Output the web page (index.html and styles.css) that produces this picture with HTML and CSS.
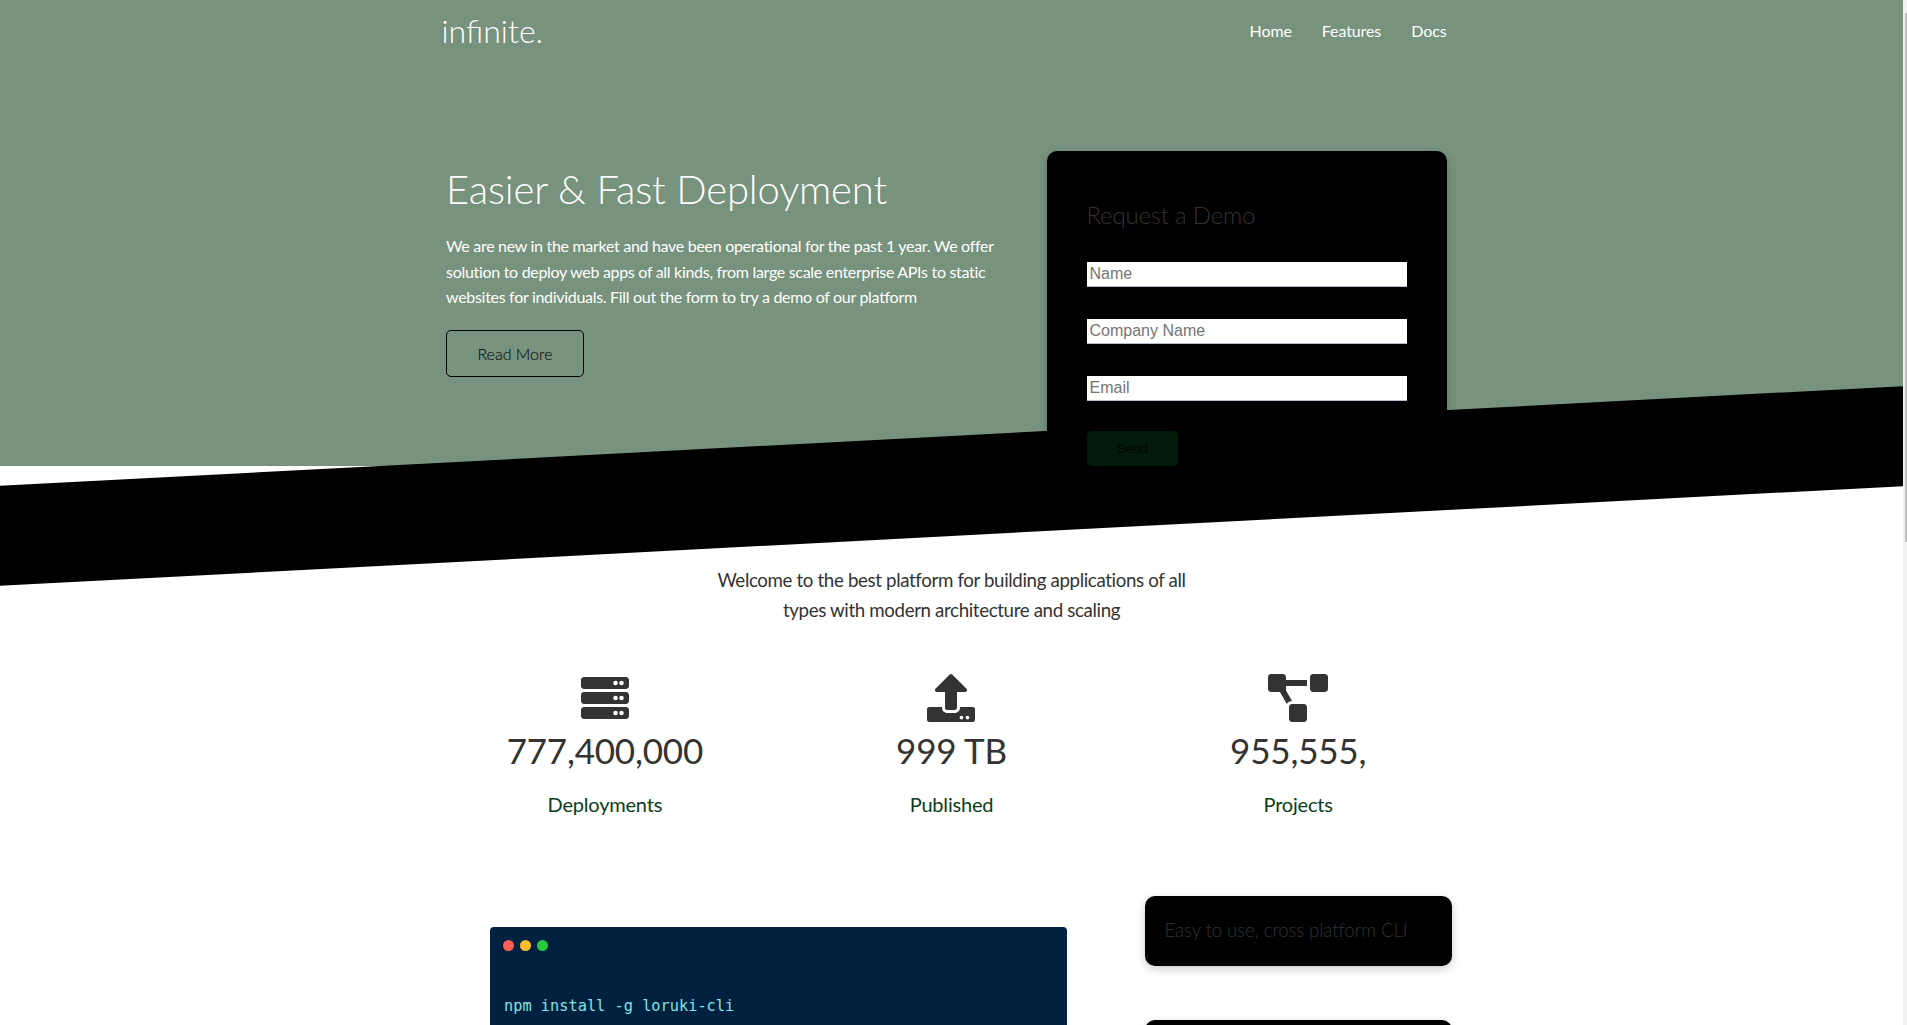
FILE: index.html
```html
<!DOCTYPE html>
<html lang="en">
<head>
<meta charset="utf-8">
<title>infinite.</title>
<link rel="stylesheet" href="styles.css">
</head>
<body>
<div class="page">
  <header class="navbar">
    <div class="container navbar-inner">
      <h1 class="logo">infinite.</h1>
      <nav class="menu"><a>Home</a><a>Features</a><a>Docs</a></nav>
    </div>
  </header>

  <section class="showcase">
    <div class="container showcase-grid">
      <div class="showcase-text">
        <h1>Easier &amp; Fast Deployment</h1>
        <p>We are new in the market and have been operational for the past 1 year. We offer solution to deploy web apps of all kinds, from large scale enterprise APIs to static websites for individuals. Fill out the form to try a demo of our platform</p>
        <a class="btn-outline">Read More</a>
      </div>
      <form class="card showcase-form">
        <h2>Request a Demo</h2>
        <input type="text" placeholder="Name">
        <input type="text" placeholder="Company Name">
        <input type="text" placeholder="Email">
        <button type="button">Send</button>
      </form>
    </div>
  </section>

  <section class="stats container">
    <h3 class="stats-heading">Welcome to the best platform for building applications of all types with modern architecture and scaling</h3>
    <div class="stats-grid">
      <div class="stat">
        <svg width="48" height="48" viewBox="0 0 512 512"><path d="M480 160H32c-17.7 0-32-14.3-32-32V64c0-17.7 14.3-32 32-32h448c17.7 0 32 14.3 32 32v64c0 17.7-14.3 32-32 32zm-48-88a24 24 0 1 0 0 48 24 24 0 0 0 0-48zm-64 0a24 24 0 1 0 0 48 24 24 0 0 0 0-48zM480 320H32c-17.7 0-32-14.3-32-32v-64c0-17.7 14.3-32 32-32h448c17.7 0 32 14.3 32 32v64c0 17.7-14.3 32-32 32zm-48-88a24 24 0 1 0 0 48 24 24 0 0 0 0-48zm-64 0a24 24 0 1 0 0 48 24 24 0 0 0 0-48zM480 480H32c-17.7 0-32-14.3-32-32v-64c0-17.7 14.3-32 32-32h448c17.7 0 32 14.3 32 32v64c0 17.7-14.3 32-32 32zm-48-88a24 24 0 1 0 0 48 24 24 0 0 0 0-48zm-64 0a24 24 0 1 0 0 48 24 24 0 0 0 0-48z"/></svg>
        <h3>777,400,000</h3>
        <p>Deployments</p>
      </div>
      <div class="stat">
        <svg width="48" height="48" viewBox="0 0 512 512"><path d="M296 384h-80c-13.3 0-24-10.7-24-24V192h-87.7c-17.8 0-26.7-21.5-14.1-34.1L242.3 5.7c7.5-7.5 19.8-7.5 27.3 0l152.2 152.2c12.6 12.6 3.7 34.1-14.1 34.1H320v168c0 13.3-10.7 24-24 24zm216-8v112c0 13.3-10.7 24-24 24H24c-13.3 0-24-10.7-24-24V376c0-13.3 10.7-24 24-24h136v8c0 30.9 25.1 56 56 56h80c30.9 0 56-25.1 56-56v-8h136c13.3 0 24 10.7 24 24zm-124 88c0-11-9-20-20-20s-20 9-20 20 9 20 20 20 20-9 20-20zm64 0c0-11-9-20-20-20s-20 9-20 20 9 20 20 20 20-9 20-20z"/></svg>
        <h3>999 TB</h3>
        <p>Published</p>
      </div>
      <div class="stat">
        <svg width="60" height="48" viewBox="0 0 640 512"><path d="M384 320H256c-17.67 0-32 14.33-32 32v128c0 17.67 14.33 32 32 32h128c17.67 0 32-14.33 32-32V352c0-17.67-14.33-32-32-32zM192 32c0-17.67-14.33-32-32-32H32C14.33 0 0 14.33 0 32v128c0 17.67 14.33 32 32 32h95.72l73.16 128.04C211.98 300.98 232.4 288 256 288h.28L192 175.51V128h224V64H192V32zM608 0H480c-17.67 0-32 14.33-32 32v128c0 17.67 14.33 32 32 32h128c17.67 0 32-14.33 32-32V32c0-17.67-14.33-32-32-32z"/></svg>
        <h3>955,555,</h3>
        <p>Projects</p>
      </div>
    </div>
  </section>

  <section class="cli container">
    <div class="terminal">
      <div class="dots"><i class="red"></i><i class="yellow"></i><i class="green"></i></div>
      <code>npm install -g loruki-cli</code>
    </div>
    <div class="cli-cards">
      <div class="card cli-card"><h3>Easy to use, cross platform CLI</h3></div>
      <div class="card cli-card"></div>
    </div>
  </section>
</div>
<div class="scrollbar"><div class="thumb"></div></div>
</body>
</html>
```
FILE: styles.css
```css
* { box-sizing: border-box; margin: 0; padding: 0; }

body {
  display: flex;
  height: 1025px;
  overflow: hidden;
  font-family: Lato, sans-serif;
  font-size: 16px;
  font-weight: 400;
  line-height: 1.6;
  font-variant-ligatures: none;
  color: #333;
  background: #fff;
}

h1, h2 { font-weight: 300; line-height: 1.2; }

.page { width: 1903px; height: 1025px; overflow: hidden; }

.container { width: 1100px; margin: 0 auto; padding: 0 40px; }

.navbar { height: 66px; background: #77927d; color: #fff; }
.navbar-inner { display: flex; justify-content: space-between; }
.logo { padding-top: 12px; font-size: 32px; font-variant-ligatures: normal; }
.menu { display: flex; gap: 30px; padding: 18px 15px 0 0; letter-spacing: -0.1px; }

.showcase { position: relative; height: 400px; background: #77927d; color: #fff; }
.showcase::before {
  content: "";
  position: absolute;
  left: 0;
  right: 0;
  bottom: -70px;
  height: 100px;
  background: #000;
  transform: skewY(-3deg);
}
.showcase-grid { position: relative; display: flex; justify-content: space-between; padding: 0 55px 0 44.5px; }
.showcase-text { width: 561px; padding-top: 99px; }
.showcase-text h1 { font-size: 40px; letter-spacing: -0.15px; }
.showcase-text p { margin: 20px 0; letter-spacing: -0.3px; }
.btn-outline {
  display: inline-block;
  width: 138px;
  padding: 10px 0;
  border: 1px solid #000;
  border-radius: 5px;
  color: #000;
  font-weight: 300;
  text-align: center;
}

.card { background: #000; border-radius: 10px; box-shadow: 0 3px 10px rgba(0, 0, 0, 0.2); }

.showcase-form { width: 400px; height: 350px; margin-top: 85px; padding: 49px 40px 40px; color: #333; }
.showcase-form h2 { margin-bottom: 33px; font-size: 24px; line-height: 29px; letter-spacing: -0.2px; }
.showcase-form input {
  display: block;
  width: 100%;
  height: 25px;
  margin-bottom: 32px;
  padding: 0 3px 1px;
  border: 0;
  border-bottom: 1px solid #b4becb;
  font: 16px "Liberation Sans", sans-serif;
}
.showcase-form input::placeholder { color: #757575; }
.showcase-form button {
  display: block;
  width: 91px;
  height: 35px;
  margin-top: -2px;
  border: 0;
  border-radius: 5px;
  background: #001b07;
  color: #000;
  font: 13.33px "Liberation Sans", sans-serif;
}

.stats { padding-top: 100px; text-align: center; }
.stats-heading { width: 500px; margin: 0 auto; font-size: 18.72px; font-weight: 400; letter-spacing: -0.36px; }
.stats-grid { display: grid; grid-template-columns: repeat(3, 1fr); gap: 20px; margin-top: 48px; }
.stat svg { display: block; margin: 0 auto; fill: #333; }
.stat h3 { font-size: 35px; font-weight: 400; line-height: 56px; letter-spacing: -0.2px; }
.stat p { margin-top: 10px; color: #0a3d1a; font-size: 20px; letter-spacing: -0.2px; }

.cli { display: grid; grid-template-columns: 2fr 1fr; gap: 20px; margin-top: 76px; }
.terminal {
  width: 577px;
  height: 300px;
  margin: 31px 0 0 48.5px;
  padding: 13px 12.5px;
  border-radius: 4px;
  background: #002240;
}
.dots { display: flex; gap: 6px; }
.dots i { width: 11px; height: 11px; border-radius: 50%; }
.red { background: #ff5f56; }
.yellow { background: #ffbd2e; }
.green { background: #27c93f; }
.terminal code {
  display: block;
  margin: 43px 0 0 1.5px;
  color: #80e3e6;
  font: 15.3px/24px "DejaVu Sans Mono", monospace;
}
.cli-cards { width: 307px; justify-self: end; margin-right: 10px; }
.cli-card { height: 70px; margin-bottom: 54px; padding: 20px; }
.cli-card h3 { font-size: 18.72px; font-weight: 300; letter-spacing: -0.12px; }

.scrollbar { width: 4px; height: 1025px; padding: 13px 0 0 2px; background: #f1f1f1; }
.thumb { height: 529px; background: #c1c1c1; }
```
